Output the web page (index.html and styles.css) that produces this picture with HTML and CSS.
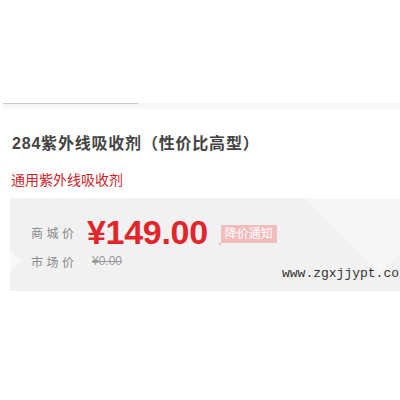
FILE: index.html
```html
<!DOCTYPE html>
<html lang="zh">
<head>
<meta charset="utf-8">
<link rel="stylesheet" href="styles.css">
</head>
<body>
<div class="page">
  <div class="tabs">
    <div class="tab-active"></div>
    <div class="tab-rest"></div>
  </div>
  <h1 class="title">284紫外线吸收剂（性价比高型）</h1>
  <p class="sub">通用紫外线吸收剂</p>
  <div class="pricebox">
    <div class="deco deco-a"></div>
    <div class="deco deco-b"></div>
    <div class="row row-main">
      <span class="label">商城价</span>
      <span class="price">¥149.00</span>
      <span class="notice">降价通知</span>
    </div>
    <div class="row row-market">
      <span class="label">市场价</span>
      <span class="old">¥0.00</span>
    </div>
    <div class="watermark">www.zgxjjypt.co</div>
  </div>
</div>
</body>
</html>
```
FILE: styles.css
```css
html, body {
  margin: 0;
  padding: 0;
  background: #fff;
}
body {
  width: 400px;
  height: 400px;
  overflow: hidden;
  font-family: "Liberation Sans", "Noto Sans CJK SC", sans-serif;
}
.page {
  padding-top: 103px;
}
.tabs {
  display: flex;
  height: 7px;
}
.tab-active {
  width: 135px;
  margin-left: 3px;
  border-top: 1px solid #c9c9c9;
  background: linear-gradient(#f3f3f3, #fcfcfc);
}
.tab-rest {
  flex: 1;
  background: linear-gradient(#f4f4f4, #fafafa);
}
.title {
  margin: 23px 0 0 12px;
  font-size: 16px;
  line-height: 22px;
  font-weight: bold;
  color: #444;
  letter-spacing: 0.8px;
}
.sub {
  margin: 16px 0 0 11px;
  font-size: 14px;
  line-height: 18px;
  color: #d0222a;
}
.pricebox {
  position: relative;
  overflow: hidden;
  margin: 9px 0 0 10px;
  height: 93px;
  background: #f1f1f1;
}
.deco {
  position: absolute;
  background: #f6f6f6;
  transform: rotate(45deg);
}
.deco-a {
  width: 26px;
  height: 26px;
  left: -20px;
  top: 50px;
  background: #f8f8f8;
}
.deco-b {
  width: 120px;
  height: 120px;
  right: -40px;
  top: -70px;
}
.row {
  position: relative;
  display: flex;
  align-items: center;
  padding-left: 21px;
}
.row-main {
  margin-top: 16px;
  height: 36px;
}
.row-market {
  margin-top: 0;
  height: 22px;
}
.label {
  font-size: 12px;
  color: #888;
  letter-spacing: 3.5px;
  width: 56px;
}
.price {
  font-size: 34px;
  font-weight: bold;
  color: #e1252b;
  letter-spacing: -0.3px;
}
.notice {
  position: relative;
  margin-left: 13px;
  margin-top: 3px;
  background: #f1bcbc;
  color: #fff;
  font-size: 12px;
  line-height: 18px;
  padding: 0 4px;
}
.notice::after {
  content: "";
  position: absolute;
  left: -3px;
  bottom: -3px;
  border-top: 3px solid #f1bcbc;
  border-left: 3px solid transparent;
}
.old {
  font-size: 12px;
  color: #999;
  text-decoration: line-through;
  margin-left: 5px;
}
.watermark {
  position: absolute;
  left: 272px;
  top: 68px;
  font-family: "Liberation Mono", monospace;
  font-size: 13px;
  color: #333;
  white-space: nowrap;
}
```
